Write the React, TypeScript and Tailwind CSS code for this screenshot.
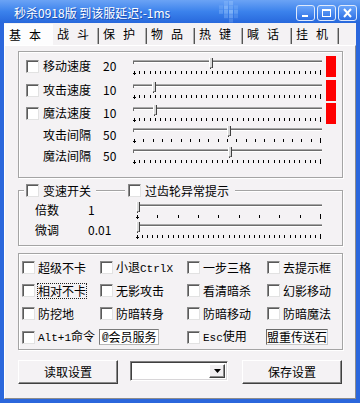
import React from "react";

const mono = "font-['Liberation_Mono',monospace] text-[11px]";

function CheckBox() {
  return (
    <span className="block w-[13px] h-[13px] shrink-0 bg-white border border-t-[#8a8a8a] border-l-[#8a8a8a] border-r-[#e2e2e2] border-b-[#e2e2e2] shadow-[inset_1px_1px_0_#5a5a5a]" />
  );
}

function Slider({ w, ticks, thumb }: { w: number; ticks: number; thumb: number }) {
  const xs = Array.from({ length: ticks + 1 }, (_, i) => Math.round(1 + (i * (w - 3)) / ticks));
  return (
    <svg width={w} height={17} shapeRendering="crispEdges" className="block shrink-0">
      <rect x={0} y={2} width={w} height={1} fill="#a8a8a8" />
      <rect x={0} y={3} width={w} height={1} fill="#6c6c6c" />
      <rect x={1} y={4} width={w - 1} height={1} fill="#ffffff" />
      <rect x={0} y={3} width={1} height={3} fill="#6c6c6c" />
      {xs.map((x, i) =>
        i === 0 ? null : (
          <rect
            key={i}
            x={x}
            y={i === ticks ? 12 : 13}
            width={1}
            height={i === ticks ? 5 : 3}
            fill="#000"
          />
        )
      )}
      <rect x={1} y={13} width={1} height={4} fill="#000" />
      <rect x={0} y={15} width={3} height={1} fill="#000" />
      <rect x={thumb} y={0} width={4} height={9} fill="#d8d8d8" />
      <rect x={thumb} y={0} width={1} height={9} fill="#ffffff" />
      <rect x={thumb + 3} y={0} width={1} height={10} fill="#404040" />
      <rect x={thumb + 1} y={9} width={2} height={1} fill="#808080" />
      <rect x={thumb + 1} y={10} width={1} height={1} fill="#404040" />
    </svg>
  );
}

function TitleButton({ kind }: { kind: "min" | "max" | "close" }) {
  return (
    <div className="w-[19px] h-[16px] rounded-[3px] border border-[#dfe9fb] bg-gradient-to-b from-[#6aa5fa] to-[#2d6fe4] flex items-center justify-center">
      <svg width="11" height="10" viewBox="0 0 11 10" shapeRendering="crispEdges">
        {kind === "min" && <rect x="2" y="7" width="6" height="2" fill="#fff" />}
        {kind === "max" && (
          <>
            <rect x="1.5" y="1.5" width="8" height="7" fill="none" stroke="#fff" />
            <rect x="1" y="1" width="9" height="2" fill="#fff" />
          </>
        )}
        {kind === "close" && (
          <path d="M2 1 L9 9 M9 1 L2 9" stroke="#fff" strokeWidth="2" shapeRendering="auto" />
        )}
      </svg>
    </div>
  );
}

function TitlePattern() {
  const cells = [
    [1, 0, 0.25], [2, 0, 0.35], [0, 1, 0.2], [1, 1, 0.5], [2, 1, 0.3], [3, 1, 0.2],
    [0, 2, 0.3], [1, 2, 0.45], [2, 2, 0.6], [3, 2, 0.35], [1, 3, 0.3], [2, 3, 0.4], [3, 3, 0.2], [2, 4, 0.25],
  ];
  return (
    <svg width="22" height="22" className="absolute left-[219px] top-[1px]">
      {cells.map(([cx, cy, o], i) => (
        <rect key={i} x={cx * 5} y={cy * 4.4} width={4} height={4} fill="#a9d0ff" opacity={o} />
      ))}
    </svg>
  );
}

const tabs = [
  { t: "基本", w: "w-[49px]" },
  { t: "战斗", w: "w-[46px]" },
  { t: "保护", w: "w-[48px]" },
  { t: "物品", w: "w-[48px]" },
  { t: "热键", w: "w-[48px]" },
  { t: "喊话", w: "w-[49px]" },
  { t: "挂机", w: "w-[47px]" },
];

const speedRows = [
  { label: "移动速度", value: "20", check: true, thumb: 76, ticks: 36, red: true, h: "h-[24px]" },
  { label: "攻击速度", value: "10", check: true, thumb: 19, ticks: 36, red: true, h: "h-[24px]" },
  { label: "魔法速度", value: "10", check: true, thumb: 20, ticks: 36, red: true, h: "h-[22px]" },
  { label: "攻击间隔", value: "50", check: false, thumb: 94, ticks: 20, red: false, h: "h-[21px]" },
  { label: "魔法间隔", value: "50", check: false, thumb: 95, ticks: 36, red: false, h: "h-[21px]" },
];

function Cb({ children, focus }: { children: React.ReactNode; focus?: boolean }) {
  return (
    <div className="flex items-center gap-[3px] whitespace-nowrap">
      <CheckBox />
      {focus ? (
        <span className="-ml-px border border-dotted border-[#222] leading-[14px]">{children}</span>
      ) : (
        <span>{children}</span>
      )}
    </div>
  );
}

const groupBox =
  "border border-[#a4a4a4] shadow-[inset_1px_1px_0_#ffffff,1px_1px_0_#ffffff]";

export default function App() {
  return (
    <div className="w-[360px] h-[403px] flex flex-col overflow-hidden bg-[#2b67dc] font-['Noto_Sans_CJK_SC',sans-serif] text-[12px] leading-none text-black select-none">
      {/* title bar */}
      <div className="relative h-[23px] shrink-0 flex items-start bg-gradient-to-b from-[#6ba3f5] via-[#3b82ec] to-[#2868dc]">
        <TitlePattern />
        <div className="pl-[14px] pt-[7px] text-white [text-shadow:1px_1px_0_#1d4fb0]">
          秒杀0918版 到该服延迟:-1ms
        </div>
        <div className="ml-auto mr-[3px] mt-[5px] flex gap-[2px]">
          <TitleButton kind="min" />
          <TitleButton kind="max" />
          <TitleButton kind="close" />
        </div>
      </div>

      {/* client */}
      <div className="flex-1 flex flex-col mx-[4px] mb-[4px] bg-[#f4f2f4]">
        {/* tabs */}
        <div className="h-[22px] shrink-0 flex items-end">
          {tabs.map((tab, i) =>
            i === 0 ? (
              <div key={tab.t} className={`${tab.w} h-[21px] pt-[4px] pl-[4px] bg-[#fdfdfe] border-l border-t border-white tracking-[8px]`}>
                {tab.t}
              </div>
            ) : (
              <div key={tab.t} className={`${tab.w} h-[18px] pt-[1px] pl-[4px] tracking-[8px] flex`}>
                <span className="flex-1">{tab.t}</span>
                <span className="w-[1px] h-[16px] bg-[#b0b0b0]" />
                <span className="w-[1px] h-[16px] bg-[#555555]" />
              </div>
            )
          )}
        </div>

        {/* panel */}
        <div className="flex-1 flex flex-col border border-t-white border-l-white border-r-[#8c8c8c] border-b-[#8c8c8c]">
          {/* speed group */}
          <div className={`ml-[13px] mr-[12px] mt-[5px] h-[127px] pl-[7px] pt-[2px] flex flex-col ${groupBox}`}>
            {speedRows.map((r) => (
              <div key={r.label} className={`${r.h} flex items-center`}>
                <div className="w-[17px]">{r.check && <CheckBox />}</div>
                <div className="w-[60px]">{r.label}</div>
                <div className="w-[30px]">{r.value}</div>
                <Slider w={189} ticks={r.ticks} thumb={r.thumb} />
                {r.red && <div className="ml-[4px] w-[10px] h-[21px] bg-[#ff0000]" />}
              </div>
            ))}
          </div>

          {/* gear group */}
          <div className={`relative ml-[13px] mr-[12px] mt-[12px] h-[56px] pl-[16px] pt-[9px] flex flex-col ${groupBox}`}>
            <div className="absolute -top-[7px] left-[5px] h-[13px] flex items-center gap-[29px]">
              <span className="flex items-center gap-[4px] pl-[2px] pr-[5px] bg-[#f4f2f4]">
                <CheckBox />
                变速开关
              </span>
              <span className="flex items-center gap-[4px] pl-[3px] pr-[6px] bg-[#f4f2f4]">
                <CheckBox />
                过齿轮异常提示
              </span>
            </div>
            <div className="h-[20px] flex items-center">
              <div className="w-[53px]">倍数</div>
              <div className="w-[48px]">1</div>
              <Slider w={186} ticks={9} thumb={0} />
            </div>
            <div className="h-[20px] flex items-center">
              <div className="w-[53px]">微调</div>
              <div className="w-[48px]">0.01</div>
              <Slider w={186} ticks={36} thumb={0} />
            </div>
          </div>

          {/* options group */}
          <div className={`ml-[13px] mr-[12px] mt-[7px] h-[97px] pl-[3px] pt-[2px] grid grid-cols-[78px_87px_80px_1fr] grid-rows-[23px_23px_23px_24px] items-center ${groupBox}`}>
            <Cb>超级不卡</Cb>
            <Cb>
              小退<span className={mono}>CtrlX</span>
            </Cb>
            <Cb>一步三格</Cb>
            <Cb>去提示框</Cb>

            <Cb focus>相对不卡</Cb>
            <Cb>无影攻击</Cb>
            <Cb>看清暗杀</Cb>
            <Cb>幻影移动</Cb>

            <Cb>防挖地</Cb>
            <Cb>防暗转身</Cb>
            <Cb>防暗移动</Cb>
            <Cb>防暗魔法</Cb>

            <Cb>
              <span className={mono}>Alt+1</span>命令
            </Cb>
            <div className="-ml-px w-[60px] h-[16px] pl-[2px] flex items-center whitespace-nowrap overflow-hidden bg-white border border-t-[#7a7a7a] border-l-[#7a7a7a] border-r-[#b8b8b8] border-b-[#b8b8b8]">
              <span className={mono}>@</span>会员服务
            </div>
            <Cb>
              <span className={mono}>Esc</span>使用
            </Cb>
            <div className="-ml-px w-[62px] h-[16px] flex items-center whitespace-nowrap overflow-hidden bg-[#fbfbfb] border border-t-[#6a6a6a] border-l-[#6a6a6a] border-r-[#c8c8c8] border-b-[#c8c8c8]">
              盟重传送石
            </div>
          </div>

          {/* buttons */}
          <div className="ml-[13px] mt-[10px] flex items-start">
            <div className="w-[100px] h-[24px] flex items-center justify-center bg-[#f4f2f4] border border-t-white border-l-white border-r-[#404040] border-b-[#404040] shadow-[inset_-1px_-1px_0_#8a8a8a]">
              读取设置
            </div>
            <div className="ml-[12px] mt-[1px] w-[98px] h-[20px] flex justify-end bg-white border border-t-[#808080] border-l-[#808080] border-r-white border-b-white shadow-[inset_1px_1px_0_#404040,inset_-1px_-1px_0_#d8d6d8] p-[2px]">
              <div className="w-[16px] h-full flex items-center justify-center bg-[#f0eef0] border border-t-white border-l-white border-r-[#404040] border-b-[#404040] shadow-[inset_-1px_-1px_0_#8a8a8a]">
                <svg width="7" height="4" viewBox="0 0 7 4">
                  <path d="M0 0 H7 L3.5 4 Z" fill="#000" />
                </svg>
              </div>
            </div>
            <div className="ml-[14px] w-[100px] h-[24px] flex items-center justify-center bg-[#f4f2f4] border border-t-white border-l-white border-r-[#404040] border-b-[#404040] shadow-[inset_-1px_-1px_0_#8a8a8a]">
              保存设置
            </div>
          </div>
        </div>
      </div>
    </div>
  );
}
